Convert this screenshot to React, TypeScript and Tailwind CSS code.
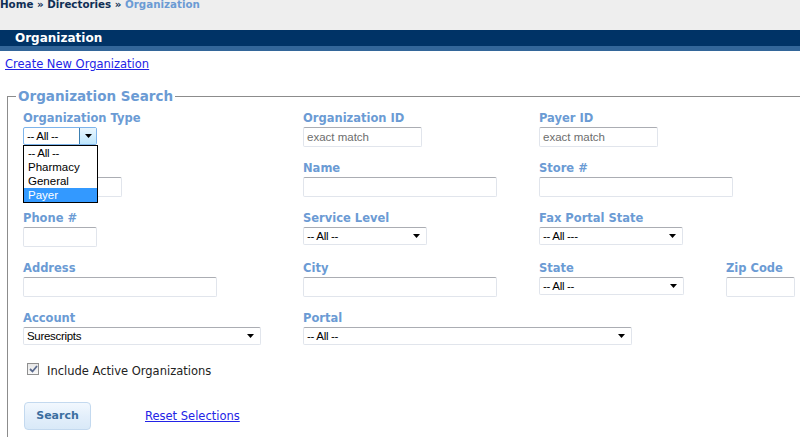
import React from "react";

const V = { fontFamily: '"DejaVu Sans", Verdana, sans-serif' };
const A = { fontFamily: '"Liberation Sans", Arial, sans-serif' };

function Label({ children }: { children: React.ReactNode }) {
  return (
    <div className="h-[14px] text-[11.5px] leading-[14px] font-bold text-[#6b9bd4] whitespace-nowrap" style={V}>
      {children}
    </div>
  );
}

function TextBox({ w, placeholder }: { w: number; placeholder?: string }) {
  return (
    <div
      className="mt-[2px] h-[20px] rounded-[2px] border border-[#e1e5ec] border-t-[#abadb3] bg-white pl-[3px] text-[11.5px] leading-[18px] text-[#6d6d6d] whitespace-nowrap overflow-hidden"
      style={{ ...A, width: w }}
    >
      {placeholder}
    </div>
  );
}

function Arrow() {
  return (
    <svg width="7" height="4" viewBox="0 0 7 4" className="block">
      <path d="M0 0H7L3.5 4Z" fill="#000" />
    </svg>
  );
}

function Select({ w, value }: { w: number; value: string }) {
  return (
    <div
      className="mt-[2px] flex h-[18px] items-center justify-between rounded-[2px] border border-[#e1e5ec] border-t-[#abadb3] bg-white pl-[3px] pr-[6px] text-[11.5px] leading-[16px] text-black"
      style={{ ...A, width: w }}
    >
      <span className="tracking-[-0.3px]">{value}</span>
      <Arrow />
    </div>
  );
}

function Cell({ w, children }: { w?: number; children: React.ReactNode }) {
  return (
    <div className="shrink-0" style={w ? { width: w } : undefined}>
      {children}
    </div>
  );
}

export default function App() {
  return (
    <div className="relative h-[437px] w-[800px] overflow-hidden bg-white">
      {/* breadcrumb */}
      <div className="flex h-[30px] flex-col overflow-hidden bg-[#eeeeee]">
        <div className="mt-[-3px] text-[10.3px] leading-[14px] font-bold text-[#0f2f55] whitespace-nowrap" style={V}>
          Home » Directories » <span className="text-[#6b9bd4]">Organization</span>
        </div>
      </div>
      {/* title bar */}
      <div className="h-[16px] bg-[#003366] pl-[15px] text-[12px] leading-[16px] font-bold text-white" style={V}>
        Organization
      </div>
      <div className="h-[5px] bg-[#336699]" />

      <div className="pl-[5px] pt-[6px] text-[11.5px] leading-[14px]" style={V}>
        <a className="text-[#2323e6] underline" href="#">
          Create New Organization
        </a>
      </div>

      <fieldset className="ml-[7px] mt-[17px] border-l border-t border-[#8c8c8c] p-0">
        <legend className="ml-[8px] px-[2px] text-[13.5px] leading-[16px] font-bold text-[#6b9bd4]" style={V}>
          Organization Search
        </legend>

        <div className="pl-[15px] pt-[7px]">
          {/* row 1 */}
          <div className="flex h-[50px]">
            <Cell w={280}>
              <Label>Organization Type</Label>
              <div className="relative">
                <div
                  className="mt-[2px] flex h-[18px] w-[74px] items-stretch rounded-[2px] border border-[#7eb4ea] bg-white text-[11.5px] leading-[16px] text-black"
                  style={A}
                >
                  <span className="flex-1 pl-[3px] tracking-[-0.3px]">-- All --</span>
                  <span className="flex w-[17px] items-center justify-center border-l border-[#3c7fb1] bg-[linear-gradient(#eaf6fd,#bee6fd)]">
                    <Arrow />
                  </span>
                </div>
                <div
                  className="absolute left-0 top-[18px] z-10 w-[75px] border border-black bg-white text-[11.5px] leading-[14px] text-black"
                  style={A}
                >
                  <div className="pl-[4px] tracking-[-0.3px]">-- All --</div>
                  <div className="pl-[4px]">Pharmacy</div>
                  <div className="pl-[4px]">General</div>
                  <div className="bg-[#3399ff] pl-[4px] text-white">Payer</div>
                </div>
              </div>
            </Cell>
            <Cell w={236}>
              <Label>Organization ID</Label>
              <TextBox w={119} placeholder="exact match" />
            </Cell>
            <Cell w={187}>
              <Label>Payer ID</Label>
              <TextBox w={119} placeholder="exact match" />
            </Cell>
          </div>

          {/* row 2 */}
          <div className="flex h-[50px]">
            <Cell w={280}>
              <Label>NCPDP ID</Label>
              <TextBox w={99} placeholder="exact match" />
            </Cell>
            <Cell w={236}>
              <Label>Name</Label>
              <TextBox w={194} />
            </Cell>
            <Cell w={187}>
              <Label>Store #</Label>
              <TextBox w={194} />
            </Cell>
          </div>

          {/* row 3 */}
          <div className="flex h-[50px]">
            <Cell w={280}>
              <Label>Phone #</Label>
              <TextBox w={74} />
            </Cell>
            <Cell w={236}>
              <Label>Service Level</Label>
              <Select w={124} value="-- All --" />
            </Cell>
            <Cell w={187}>
              <Label>Fax Portal State</Label>
              <Select w={144} value="-- All ---" />
            </Cell>
          </div>

          {/* row 4 */}
          <div className="flex h-[50px]">
            <Cell w={280}>
              <Label>Address</Label>
              <TextBox w={194} />
            </Cell>
            <Cell w={236}>
              <Label>City</Label>
              <TextBox w={194} />
            </Cell>
            <Cell w={187}>
              <Label>State</Label>
              <Select w={145} value="-- All --" />
            </Cell>
            <Cell>
              <Label>Zip Code</Label>
              <TextBox w={69} />
            </Cell>
          </div>

          {/* row 5 */}
          <div className="flex h-[36px]">
            <Cell w={280}>
              <Label>Account</Label>
              <Select w={238} value="Surescripts" />
            </Cell>
            <Cell>
              <Label>Portal</Label>
              <Select w={329} value="-- All --" />
            </Cell>
          </div>

          {/* checkbox */}
          <div className="mt-[15px] flex items-center pl-[4px]">
            <span className="flex h-[12px] w-[12px] items-center justify-center border border-[#8f8f8f] bg-[linear-gradient(#e8e8e8,#f8f8f8)]">
              <svg width="9" height="8" viewBox="0 0 9 8">
                <path d="M1 4L3.5 6.5L8 1" fill="none" stroke="#5a6a8e" strokeWidth="1.8" />
              </svg>
            </span>
            <span className="ml-[8px] translate-y-[2px] text-[11.5px] leading-[14px] text-[#222]" style={V}>
              Include Active Organizations
            </span>
          </div>

          {/* buttons */}
          <div className="mt-[26px] flex items-center pl-[1px]">
            <div
              className="flex h-[28px] w-[67px] items-center justify-center rounded-[4px] border border-[#c3d9ef] bg-[linear-gradient(#f2f8fe,#e3effb_50%,#d9e9f8)] text-[11px] font-bold text-[#3b6ea0]"
              style={V}
            >
              Search
            </div>
            <a className="ml-[54px] text-[11.5px] leading-[14px] text-[#2323e6] underline" style={V} href="#">
              Reset Selections
            </a>
          </div>
          <div className="h-[40px]" />
        </div>
      </fieldset>
    </div>
  );
}
